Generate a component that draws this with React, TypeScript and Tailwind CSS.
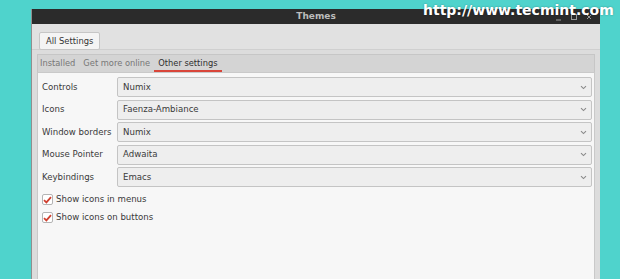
//Settings rows
const rows = [
  { label: "Controls", value: "Numix" },
  { label: "Icons", value: "Faenza-Ambiance" },
  { label: "Window borders", value: "Numix" },
  { label: "Mouse Pointer", value: "Adwaita" },
  { label: "Keybindings", value: "Emacs" },
];

const checks = ["Show icons in menus", "Show icons on buttons"];

const font = "font-['DejaVu_Sans',sans-serif]";

const Chevron = () => (
  <svg width="7" height="5" viewBox="0 0 7 5" className="shrink-0">
    <path d="M1 1.2 L3.5 3.6 L6 1.2" fill="none" stroke="#8a8a8a" strokeWidth="1.1" />
  </svg>
);

const CheckBox = () => (
  <div className="w-[11px] h-[11px] rounded-[2px] border border-[#b4b4b4] bg-white flex items-center justify-center shrink-0">
    <svg width="9" height="8" viewBox="0 0 9 8">
      <path d="M1 4.2 L3.4 6.4 L8 1.2" fill="none" stroke="#d0402f" strokeWidth="1.8" />
    </svg>
  </div>
);

//Window buttons, drawn
const WindowControls = () => (
  <svg width="40" height="8" viewBox="0 0 40 8" className="mr-[6px]">
    <path d="M2 7 H7" stroke="#9a9a9a" strokeWidth="1" />
    <rect x="17.5" y="1.5" width="5" height="5" fill="none" stroke="#9a9a9a" strokeWidth="1" />
    <path d="M33 2 L37 6 M37 2 L33 6" stroke="#9a9a9a" strokeWidth="1" />
  </svg>
);

const App = () => {
  return (
    <div className={`relative w-[620px] h-[279px] overflow-hidden bg-[#4fd3cc] pl-[31px] pt-[9px] flex ${font}`}>
      {/* Window */}
      <div className="w-[569px] h-[300px] flex flex-col bg-[#dcdcdc] border-l border-[#8f8f8f]">
        {/* Titlebar */}
        <div className="h-[15px] bg-[#2b2b2b] grid grid-cols-[1fr_auto_1fr] items-center">
          <div />
          <p className="text-[9px] font-bold text-[#bdbdbd] leading-none">Themes</p>
          <div className="flex justify-end items-center">
            <WindowControls />
          </div>
        </div>

        {/* Toolbar */}
        <div className="h-[26px] bg-[#e1e1e1] border-b border-[#cfcfcf] pl-[7px] pt-[3px]">
          <button className="h-[18px] px-[6px] bg-[#f4f4f4] border border-[#c6c6c6] rounded-[2px] text-[8.4px] text-[#333] leading-none">
            All Settings
          </button>
        </div>

        {/* Notebook */}
        <div className="flex-1 flex flex-col px-[5px] pt-[4px]">
          <div className="h-[18px] bg-[#d4d4d4] border border-[#c6c6c6] border-b-0 flex items-stretch text-[8.3px] leading-none">
            <div className="-ml-[2px] flex">
              <span className="px-[4px] flex items-center text-[#777]">Installed</span>
              <span className="px-[4px] flex items-center text-[#777]">Get more online</span>
              <span className="px-[4px] flex items-center text-[#2f2f2f] border-b-2 border-[#d9463a] pt-[2px]">
                Other settings
              </span>
            </div>
          </div>

          <div className="flex-1 bg-[#f7f7f7] border border-[#c9c9c9] pl-[4px] pr-[2px] pt-[4px] text-[8.6px] text-[#3a3a3a]">
            <div className="flex flex-col gap-[2.5px]">
              {rows.map((row) => (
                <div key={row.label} className="flex items-center h-[20px]">
                  <p className="w-[75px] leading-none">{row.label}</p>
                  <div className="flex-1 h-[20px] flex items-center justify-between px-[5px] pr-[4px] bg-[#eeeeee] border border-[#c4c4c4] rounded-[2px]">
                    <span className="leading-none">{row.value}</span>
                    <Chevron />
                  </div>
                </div>
              ))}
            </div>

            <div className="flex flex-col gap-[7px] mt-[7px]">
              {checks.map((c) => (
                <div key={c} className="flex items-center gap-[3px]">
                  <CheckBox />
                  <span className="leading-none">{c}</span>
                </div>
              ))}
            </div>
          </div>
        </div>
      </div>

      {/* Watermark */}
      <p className="absolute left-[423px] top-[3px] text-[14px] font-bold text-white leading-none [text-shadow:0_0_2px_rgba(0,0,0,0.35)]">
        http://www.tecmint.com
      </p>
    </div>
  );
};

export default App;
